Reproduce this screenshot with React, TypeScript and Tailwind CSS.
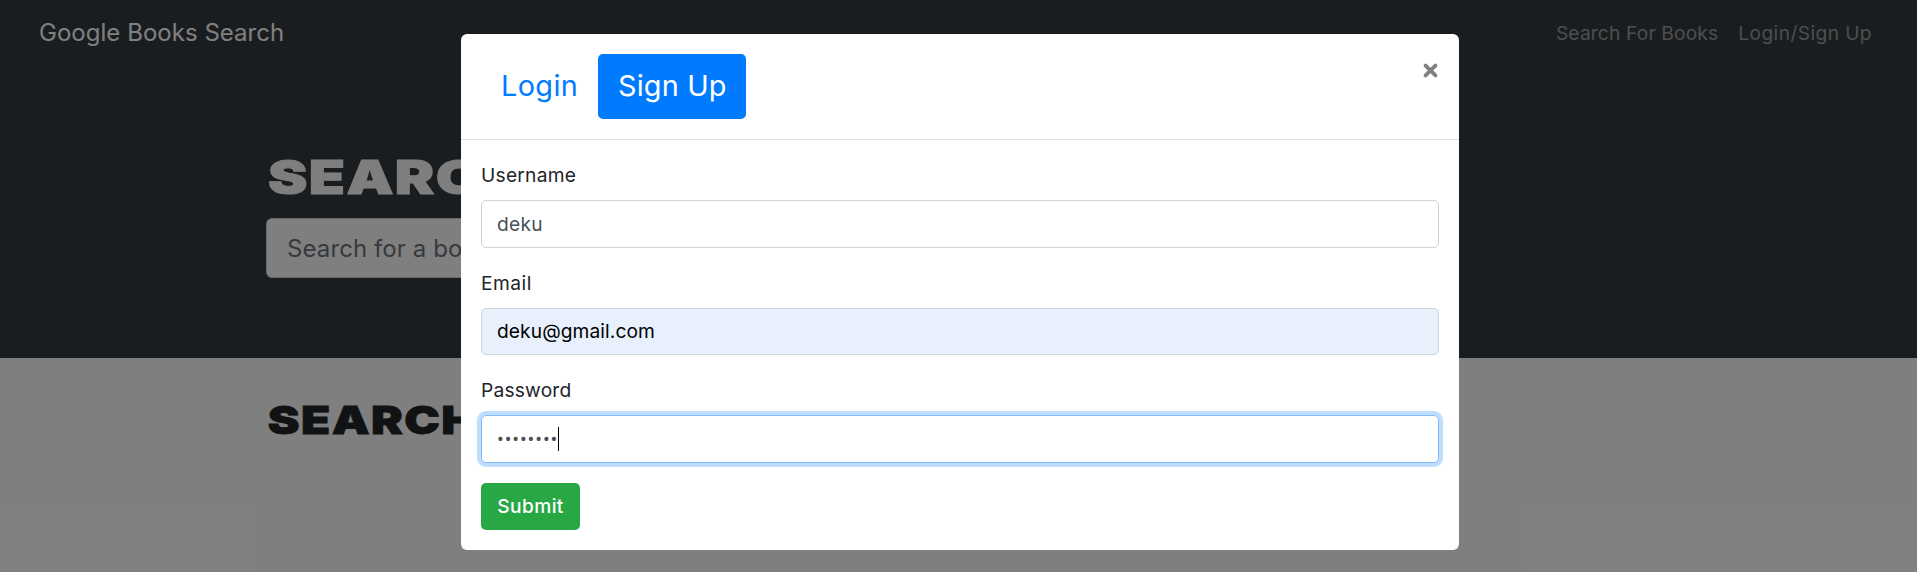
import type { ReactNode } from "react";

function Field({ label, labelClass, inputClass, children }: { label: string; labelClass: string; inputClass: string; children: ReactNode }) {
  return (
    <div className="mb-5">
      <label className={`mb-2.5 block h-[30px] text-[19.2px] leading-[30px] text-[#212529] ${labelClass}`}>{label}</label>
      <div className={`flex items-center rounded-[5px] border px-[15px] text-[19.2px] ${inputClass}`}>{children}</div>
    </div>
  );
}

function Page() {
  return (
    <div className="h-full bg-white">
      <div className="h-[358px] bg-[#343a40]">
        <nav className="flex h-[65px] items-center justify-between pr-[45px] pl-[39px]">
          <a className="text-[24px] leading-[37px] tracking-[0.03px] text-white">Google Books Search</a>
          <div className="flex gap-5 text-[19.2px] leading-[30px] text-white/50">
            <a className="tracking-[0.15px]">Search For Books</a>
            <a className="tracking-[0.4px]">Login/Sign Up</a>
          </div>
        </nav>
        <div className="ml-[266px] w-[910px] pt-[81px]">
          <h1 className="h-[72px] origin-left scale-x-[1.26] pt-px pl-[1.5px] text-[47px] leading-[60px] font-black tracking-[1.1px] whitespace-nowrap text-[#fffdff] [-webkit-text-stroke:1px_#fffdff]">
            SEARCH
          </h1>
          <div className="flex h-[60px] items-center rounded-md border border-[#ced4da] bg-white px-5 pt-px text-[24px] tracking-[0.1px] text-[#6c757d]">
            Search for a book
          </div>
        </div>
      </div>
      <div className="ml-[266px] pt-[38px]">
        <h2 className="origin-left scale-x-[1.24] pl-[1.5px] text-[38.5px] leading-[48px] font-black tracking-[1.1px] whitespace-nowrap text-[#212529] [-webkit-text-stroke:0.8px_#212529]">
          SEARCH
        </h2>
      </div>
    </div>
  );
}

function SignUpModal() {
  return (
    <div className="mt-[34px] h-[516px] w-[998px] rounded-md bg-white">
      <div className="flex h-[106px] items-start justify-between border-b border-[#dee2e6] p-5">
        <div className="flex h-[65px] text-[28.8px] leading-[64px]">
          <a className="w-[117px] pl-5 tracking-[0.4px] text-[#007bff]">Login</a>
          <a className="w-[148px] rounded-[5px] bg-[#007bff] pl-5 tracking-[0.2px] text-white">Sign Up</a>
        </div>
        <button className="mt-[9px] mr-px" aria-label="Close">
          <svg width="15" height="15" viewBox="0 0 15 15" stroke="#808080" strokeWidth="3.8" strokeLinecap="round">
            <path d="M2.6 2.6 12.4 12.4M12.4 2.6 2.6 12.4" />
          </svg>
        </button>
      </div>
      <div className="p-5">
        <Field label="Username" labelClass="tracking-[0.25px]" inputClass="h-12 border-[#ced4da] tracking-[0.3px] text-[#495057]">
          deku
        </Field>
        <Field label="Email" labelClass="tracking-[0.5px]" inputClass="h-[47px] border-[#ced4da] bg-[#e8f0fe] tracking-[0.08px] text-black">
          deku@gmail.com
        </Field>
        <Field label="Password" labelClass="tracking-[0.2px]" inputClass="h-12 border-[#80bdff] text-[#495057] ring-4 ring-[#bfdeff]">
          <span className="font-[Roboto] text-xl tracking-[0.9px]">••••••••</span>
          <span className="h-6 w-px bg-black" />
        </Field>
        <button className="block h-[47px] w-[99px] rounded-[5px] bg-[#28a745] text-[19.2px] font-medium tracking-[0.4px] text-white">Submit</button>
      </div>
    </div>
  );
}

export default function App() {
  return (
    <div className="relative h-[572px] w-[1917px] overflow-hidden font-[Inter,sans-serif]">
      <Page />
      <div className="absolute inset-0 flex items-start justify-center bg-black/50 pl-[3px]">
        <SignUpModal />
      </div>
    </div>
  );
}
